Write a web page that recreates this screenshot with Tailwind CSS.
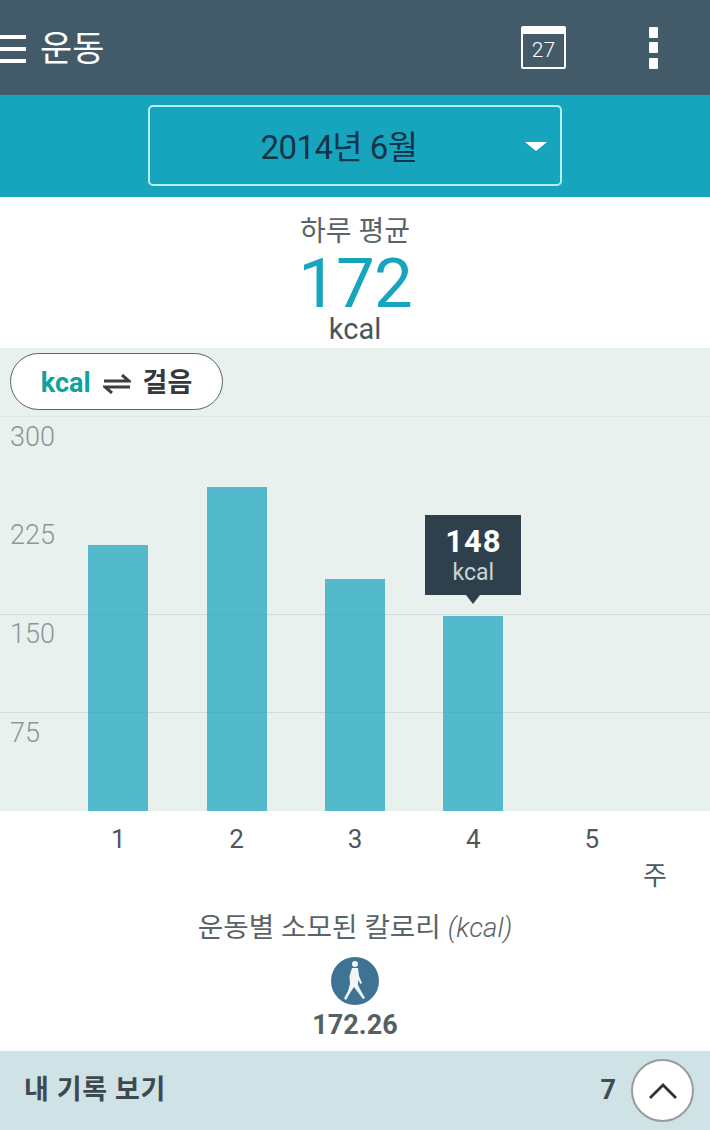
<!DOCTYPE html>
<html lang="ko">
<head>
  <meta charset="UTF-8" />
  <meta name="viewport" content="width=device-width, initial-scale=1.0"/>
  <title>운동</title>
  <script src="https://cdn.jsdelivr.net/npm/@tailwindcss/browser@4"></script>
</head>
<body class="bg-white font-['Roboto','Noto_Sans_CJK_KR',sans-serif] text-[#3c4a52]">
<div class="w-[710px] h-[1130px] overflow-hidden flex flex-col">

  <!-- Top bar -->
  <header class="h-[95px] bg-[#435a68] flex items-center text-white shrink-0">
    <div class="w-[26px] h-[28px] mt-[2px] flex flex-col justify-between">
      <div class="h-[4px] bg-white"></div>
      <div class="h-[4px] bg-white"></div>
      <div class="h-[4px] bg-white"></div>
    </div>
    <h1 class="ml-[14px] mt-[4px] text-[35px] leading-none">운동</h1>
    <div class="ml-auto mr-[83px] w-[45px] h-[43px] border-[2px] border-t-[8px] border-white rounded-[2px] flex items-center justify-center text-[21px] font-light">27</div>
    <div class="mr-[52px] h-[42px] flex flex-col justify-between">
      <div class="w-[9px] h-[11px] bg-white rounded-[1px]"></div>
      <div class="w-[9px] h-[11px] bg-white rounded-[1px]"></div>
      <div class="w-[9px] h-[11px] bg-white rounded-[1px]"></div>
    </div>
  </header>

  <!-- Month picker -->
  <div class="h-[102px] bg-[#17a5bd] flex justify-center pt-[10px] shrink-0">
    <div class="relative w-[414px] h-[81px] pr-[32px] pt-[4px] border-[2px] border-[#b5f0f5] rounded-[5px] flex items-center justify-center text-[33px] tracking-[-0.6px] text-[#14334a]">
      2014년 6월
      <div class="absolute right-[13px] top-[35px] w-0 h-0 border-x-[11px] border-x-transparent border-t-[9px] border-t-white"></div>
    </div>
  </div>

  <!-- Daily average -->
  <section class="h-[151px] flex flex-col items-center shrink-0">
    <p class="mt-[18px] text-[28px] leading-[34px] text-[#5a6468]">하루 평균</p>
    <p class="mt-[6px] text-[69px] leading-[58px] font-normal tracking-[-1px] text-[#17a5bd]">172</p>
    <p class="text-[29px] leading-[32px] text-[#4a555b]">kcal</p>
  </section>

  <!-- Chart -->
  <section class="relative h-[463px] bg-[#e9f1ef] shrink-0">
    <div class="absolute left-[10px] top-[5px] w-[213px] h-[57px] pt-[4px] bg-white border border-[#5a6468] rounded-full flex items-center justify-center gap-[12px] text-[27px] font-bold">
      <span class="text-[#0fa39b]">kcal</span>
      <svg width="28" height="20" viewBox="0 0 28 20" fill="none" stroke="#3a3f42" stroke-width="3">
        <path d="M1 7h25L19 1"/>
        <path d="M27 13H2l7 6"/>
      </svg>
      <span class="text-[#34393c]">걸음</span>
    </div>

    <div class="absolute left-0 right-0 top-[68px] h-px bg-[#dde5e3]"></div>
    <div class="absolute left-0 right-0 top-[266px] h-px bg-[#d3dcda]"></div>
    <div class="absolute left-0 right-0 top-[364px] h-px bg-[#d3dcda]"></div>

    <span class="absolute left-[10px] top-[73px] text-[27px] leading-[32px] font-light text-[#8f9596]">300</span>
    <span class="absolute left-[10px] top-[171px] text-[27px] leading-[32px] font-light text-[#8f9596]">225</span>
    <span class="absolute left-[10px] top-[270px] text-[27px] leading-[32px] font-light text-[#8f9596]">150</span>
    <span class="absolute left-[10px] top-[369px] text-[27px] leading-[32px] font-light text-[#8f9596]">75</span>

    <div class="absolute inset-0 pl-[59px] grid grid-cols-[repeat(5,118.4px)] items-end justify-items-center">
      <div class="w-[60px] h-[266px] bg-[#17a5bd]/72"></div>
      <div class="w-[60px] h-[324px] bg-[#17a5bd]/72"></div>
      <div class="w-[60px] h-[232px] bg-[#17a5bd]/72"></div>
      <div class="relative w-[60px] h-[195px] bg-[#17a5bd]/72">
        <div class="absolute left-[-18px] top-[-101px] w-[96px] h-[80px] bg-[#2f404d] flex flex-col items-center text-white">
          <span class="mt-[9px] text-[31px] leading-[36px] font-bold tracking-[1px]">148</span>
          <span class="text-[23px] leading-[26px] text-[#c9d4d8]">kcal</span>
          <div class="absolute left-[41px] top-[80px] w-0 h-0 border-x-[7px] border-x-transparent border-t-[9px] border-t-[#2f404d]"></div>
        </div>
      </div>
      <div></div>
    </div>
  </section>

  <!-- Week axis -->
  <div class="pl-[59px] pt-[12px] grid grid-cols-[repeat(5,118.4px)] justify-items-center text-[26px] leading-[32px] text-[#4d575c] shrink-0">
    <span>1</span><span>2</span><span>3</span><span>4</span><span>5</span>
  </div>
  <div class="h-[35px] pr-[43px] pt-[5px] text-right text-[26px] leading-[32px] text-[#4d575c] shrink-0">주</div>

  <!-- Calories by exercise -->
  <section class="flex-1 flex flex-col items-center pt-[21px]">
    <p class="text-[27.7px] leading-[34px] text-[#5a6468]">운동별 소모된 칼로리 <i class="font-light">(kcal)</i></p>
    <div class="mt-[12px] w-[48px] h-[48px] rounded-full bg-[#3f7394]">
      <svg width="48" height="48" viewBox="-24 -24 48 48" fill="#f1f5f7">
        <circle cx="0" cy="-17" r="3"/>
        <path d="M-3-13 3-13 4-5 7 2 5.500 3 3-1 3 4 6 10 10 17 8 18 2 10-1 6-5 12-9 19-11 17.500-7 10-5 3-5.500-5Z"/>
      </svg>
    </div>
    <p class="mt-[4px] text-[27px] leading-[32px] font-bold text-[#545f66]">172.26</p>
  </section>

  <!-- History drawer -->
  <footer class="h-[79px] bg-[#cfe2e6] flex items-center shrink-0">
    <span class="ml-[24px] text-[27px] tracking-[0.6px] font-bold text-[#3d494f]">내 기록 보기</span>
    <span class="ml-auto text-[27px] font-bold text-[#3d4d55]">7</span>
    <div class="ml-[15px] mr-[16px] w-[63px] h-[63px] rounded-full bg-white border-[2px] border-[#979d9f] flex items-center justify-center">
      <svg width="30" height="18" viewBox="0 0 30 18" fill="none" stroke="#2a3236" stroke-width="2.8">
        <path d="M2 16 15 3l13 13"/>
      </svg>
    </div>
  </footer>
</div>
</body>
</html>
